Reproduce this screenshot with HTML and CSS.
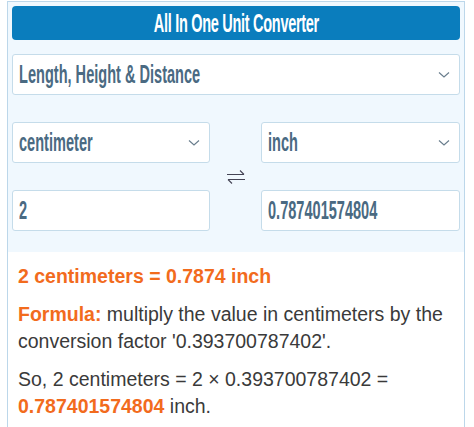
FILE: index.html
```html
<!DOCTYPE html>
<html lang="en">
<head>
  <meta charset="UTF-8">
  <meta name="viewport" content="width=device-width, initial-scale=1.0">
  <title>All In One Unit Converter</title>
<link rel="stylesheet" href="styles.css">
</head>
<body>
  <div class="converter">
    <section class="form-section">
      <h1 class="title"><span class="narrow">All In One Unit Converter</span></h1>

      <div class="field category">
        <span class="narrow">Length, Height &amp; Distance</span>
        <svg class="chevron" width="12" height="8" viewBox="0 0 12 8"><path d="M1 1.5 L6 6 L11 1.5" fill="none" stroke="#6b7f8e" stroke-width="1.2"/></svg>
      </div>

      <div class="units">
        <div class="field from-unit">
          <span class="narrow">centimeter</span>
          <svg class="chevron" width="12" height="8" viewBox="0 0 12 8"><path d="M1 1.5 L6 6 L11 1.5" fill="none" stroke="#6b7f8e" stroke-width="1.2"/></svg>
        </div>
        <div class="swap">
          <svg width="20" height="16" viewBox="0 0 20 16"><path d="M1 5.5 H18 M14 1.5 L18 5.5 M19 10.5 H2 M6 14.5 L2 10.5" fill="none" stroke="#445" stroke-width="1.1"/></svg>
        </div>
        <div class="field to-unit">
          <span class="narrow">inch</span>
          <svg class="chevron" width="12" height="8" viewBox="0 0 12 8"><path d="M1 1.5 L6 6 L11 1.5" fill="none" stroke="#6b7f8e" stroke-width="1.2"/></svg>
        </div>
        <div class="field from-value"><span class="narrow">2</span></div>
        <div class="field to-value"><span class="narrow">0.787401574804</span></div>
      </div>
    </section>

    <section class="result">
      <p class="answer">2 centimeters = 0.7874 inch</p>
      <p><strong>Formula:</strong> multiply the value in centimeters by the conversion factor '0.393700787402'.</p>
      <p>So, 2 centimeters = 2 &times; 0.393700787402 = <strong>0.787401574804</strong> inch.</p>
    </section>
  </div>
</body>
</html>
```

FILE: styles.css
```css
body {
  margin: 0;
  font-family: "Liberation Sans", Arial, sans-serif;
  background-color: #fff;
}

.converter {
  margin: 1px 9px 0 7px;
  border: 1px solid #bcd7ea;
  border-bottom: none;
  min-height: 430px;
}

.form-section {
  background-color: #f0f8fe;
  padding: 4px 4px 21px 4px;
}

.narrow {
  display: inline-block;
  transform: scaleX(0.56);
  transform-origin: left center;
  white-space: nowrap;
}

.title {
  margin: 0;
  height: 34px;
  background-color: #0a7dbd;
  border-radius: 4px;
  color: #fff;
  font-size: 25px;
  line-height: 34px;
  text-align: center;
}

.title .narrow {
  transform: scaleX(0.58);
  transform-origin: center center;
  margin: 0 -80px;
  letter-spacing: -0.5px;
}

.field {
  height: 41px;
  box-sizing: border-box;
  background-color: #fff;
  border: 1px solid #c5dcea;
  border-radius: 3px;
  display: flex;
  align-items: center;
  justify-content: space-between;
  padding: 0 9px 0 6px;
  color: #4a6a82;
  font-size: 26px;
  font-weight: bold;
  overflow: hidden;
}

.field .narrow {
  width: 0;
}

.category {
  margin-top: 14px;
}

.chevron {
  flex-shrink: 0;
}

.units {
  margin-top: 27px;
  display: grid;
  grid-template-columns: 198px 51px 1fr;
  grid-template-rows: 41px 41px;
  grid-template-areas:
    "from-unit swap to-unit"
    "from-value swap to-value";
  row-gap: 27px;
}

.from-unit { grid-area: from-unit; }
.to-unit { grid-area: to-unit; }
.from-value { grid-area: from-value; }
.to-value { grid-area: to-value; }

.swap {
  grid-area: swap;
  display: flex;
  align-items: center;
  justify-content: center;
}

.result {
  padding: 1px 10px 0 10px;
  font-size: 19.5px;
  line-height: 27px;
  color: #3a3a3a;
}

.result p {
  margin: 0 0 11px 0;
}

.result strong {
  color: #f26b1d;
}

.answer {
  color: #f26b1d;
  font-weight: bold;
  padding-top: 10px;
}
```
